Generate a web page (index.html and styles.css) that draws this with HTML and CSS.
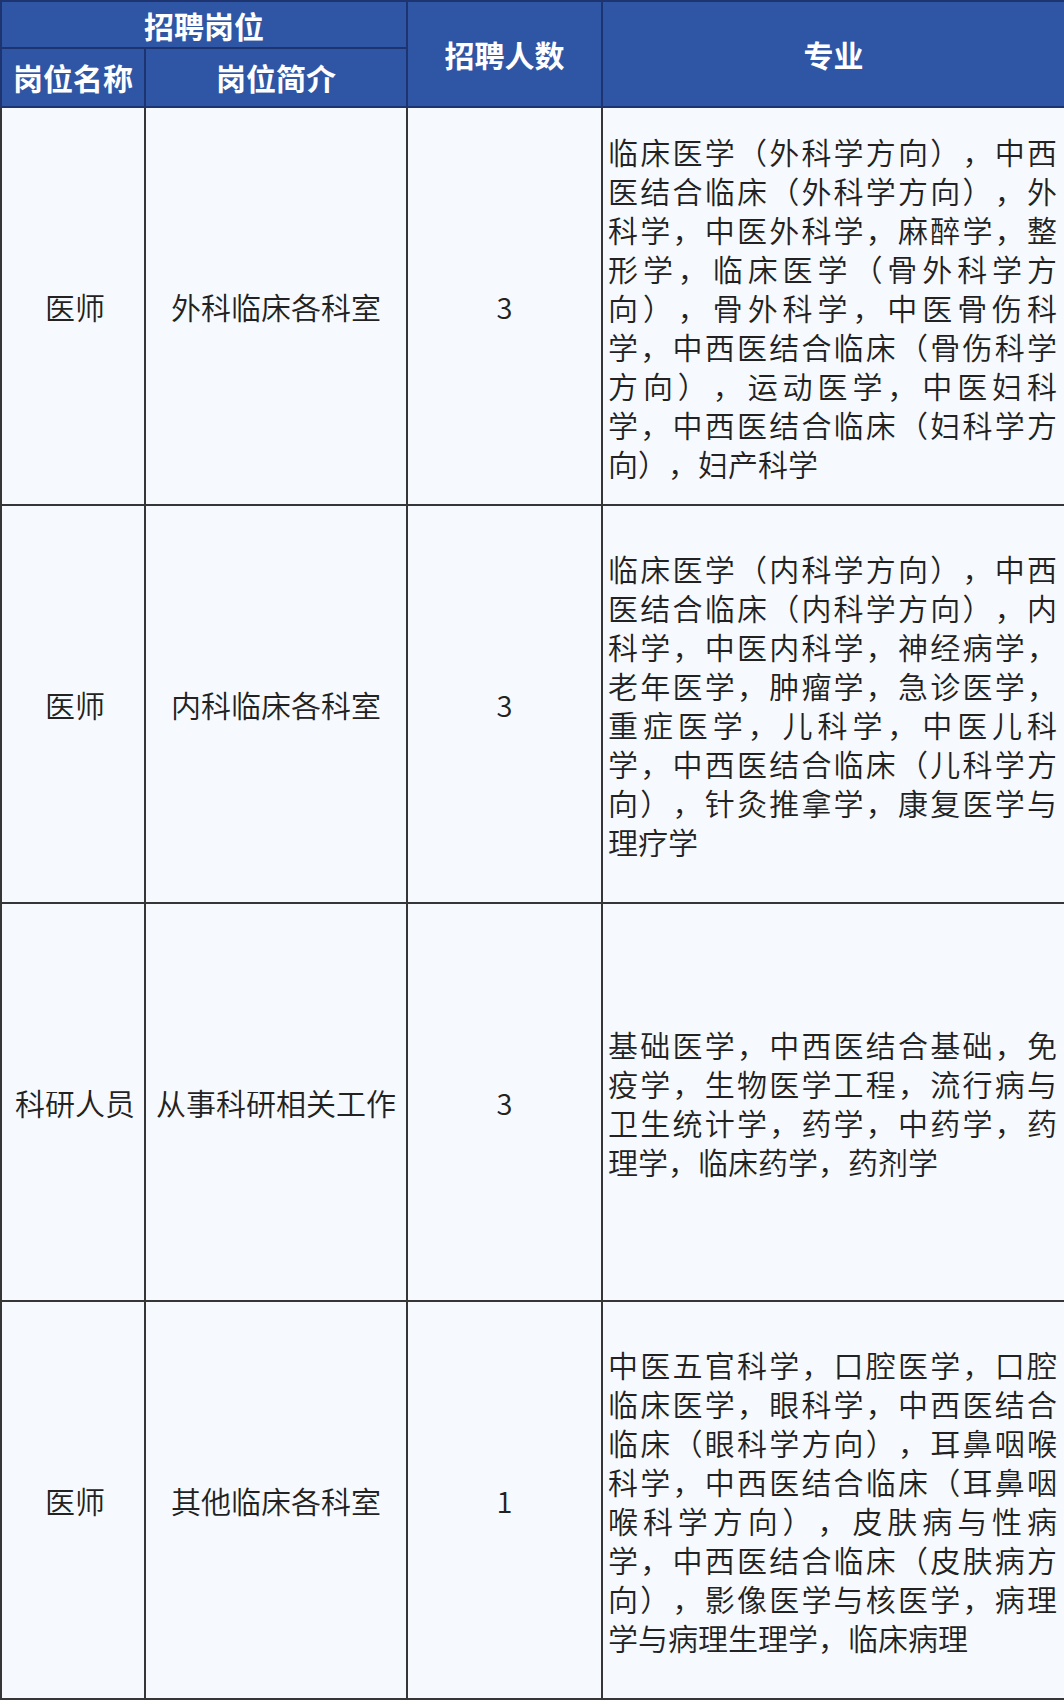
FILE: index.html
```html
<!DOCTYPE html>
<html lang="zh-CN">
<head>
<meta charset="utf-8">
<title>招聘岗位</title>
<link rel="stylesheet" href="styles.css">
</head>
<body>
<table class="jobs">
  <colgroup>
    <col class="c-name">
    <col class="c-desc">
    <col class="c-count">
    <col class="c-major">
  </colgroup>
  <thead>
    <tr class="h1">
      <th colspan="2" class="h-group">招聘岗位</th>
      <th rowspan="2" class="h-tall">招聘人数</th>
      <th rowspan="2" class="h-tall">专业</th>
    </tr>
    <tr class="h2">
      <th class="h-sub">岗位名称</th>
      <th class="h-sub">岗位简介</th>
    </tr>
  </thead>
  <tbody>
    <tr>
      <td class="name">医师</td>
      <td class="desc">外科临床各科室</td>
      <td class="count">3</td>
      <td class="major">临床医学（外科学方向），中西医结合临床（外科学方向），外科学，中医外科学，麻醉学，整形学，临床医学（骨外科学方向），骨外科学，中医骨伤科学，中西医结合临床（骨伤科学方向），运动医学，中医妇科学，中西医结合临床（妇科学方向），妇产科学</td>
    </tr>
    <tr>
      <td class="name">医师</td>
      <td class="desc">内科临床各科室</td>
      <td class="count">3</td>
      <td class="major">临床医学（内科学方向），中西医结合临床（内科学方向），内科学，中医内科学，神经病学，老年医学，肿瘤学，急诊医学，重症医学，儿科学，中医儿科学，中西医结合临床（儿科学方向），针灸推拿学，康复医学与理疗学</td>
    </tr>
    <tr>
      <td class="name">科研人员</td>
      <td class="desc">从事科研相关工作</td>
      <td class="count">3</td>
      <td class="major">基础医学，中西医结合基础，免疫学，生物医学工程，流行病与卫生统计学，药学，中药学，药理学，临床药学，药剂学</td>
    </tr>
    <tr>
      <td class="name">医师</td>
      <td class="desc">其他临床各科室</td>
      <td class="count">1</td>
      <td class="major">中医五官科学，口腔医学，口腔临床医学，眼科学，中西医结合临床（眼科学方向），耳鼻咽喉科学，中西医结合临床（耳鼻咽喉科学方向），皮肤病与性病学，中西医结合临床（皮肤病方向），影像医学与核医学，病理学与病理生理学，临床病理</td>
    </tr>
  </tbody>
</table>
</body>
</html>
```

FILE: styles.css
```css
html, body {
  margin: 0;
  padding: 0;
  background: #ffffff;
}

body {
  font-family: "Noto Sans CJK SC", "Noto Sans", sans-serif;
  color: #222222;
}

.jobs {
  width: 1064px;
  border-collapse: collapse;
  table-layout: fixed;
  background: #f6f9fd;
}

.c-name { width: 144px; }
.c-desc { width: 262px; }
.c-count { width: 195px; }
.c-major { width: 463px; }

.jobs th {
  background: #2f55a5;
  color: #ffffff;
  font-weight: 700;
  font-size: 30px;
  line-height: 34px;
  padding: 0;
  border: 2px solid #1d3470;
  text-align: center;
  vertical-align: middle;
}

.jobs .h1 { height: 47px; }
.jobs .h2 { height: 59px; }

.jobs .h-group { padding-top: 0; }
.jobs .h-sub { padding-bottom: 2px; }
.jobs .h-tall { padding-top: 0; }

.jobs tbody tr { height: 398px; }

.jobs td {
  border: 2px solid #363636;
  font-size: 30px;
  font-weight: 350;
  line-height: 39px;
  vertical-align: middle;
  padding: 0;
}

.jobs .name,
.jobs .desc,
.jobs .count {
  text-align: center;
  white-space: nowrap;
}

.jobs .name {
  padding-left: 4px;
}

.jobs .count {
  font-size: 29px;
}

.jobs .major {
  text-align: justify;
  text-justify: inter-character;
  text-spacing-trim: space-all;
  padding: 2px 7px 0 5px;
}
```
